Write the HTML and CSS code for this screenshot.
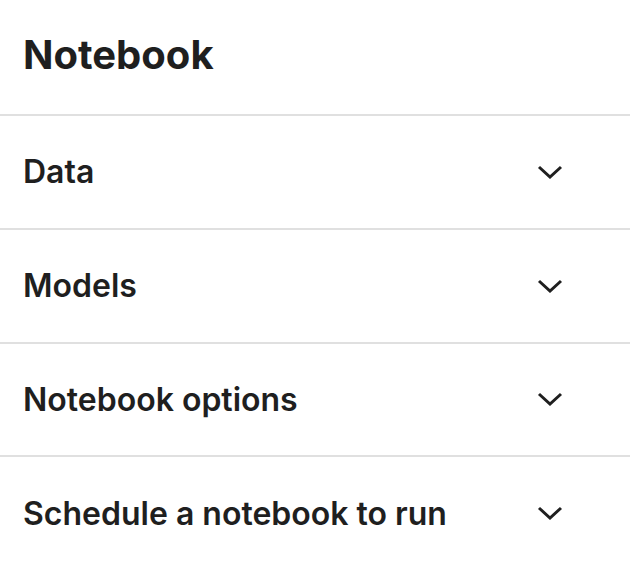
FILE: index.html
```html
<!DOCTYPE html>
<html>
<head>
<meta charset="utf-8">
<link rel="stylesheet" href="styles.css">
</head>
<body>
<div class="panel">
  <h1 class="title">Notebook</h1>
  <div class="section">
    <span class="label">Data</span>
    <svg class="chev" viewBox="0 0 26 14" width="26" height="14"><path d="M2 2 L13 12 L24 2" fill="none" stroke="#1f1f1f" stroke-width="3"/></svg>
  </div>
  <div class="section">
    <span class="label">Models</span>
    <svg class="chev" viewBox="0 0 26 14" width="26" height="14"><path d="M2 2 L13 12 L24 2" fill="none" stroke="#1f1f1f" stroke-width="3"/></svg>
  </div>
  <div class="section">
    <span class="label">Notebook options</span>
    <svg class="chev" viewBox="0 0 26 14" width="26" height="14"><path d="M2 2 L13 12 L24 2" fill="none" stroke="#1f1f1f" stroke-width="3"/></svg>
  </div>
  <div class="section">
    <span class="label">Schedule a notebook to run</span>
    <svg class="chev" viewBox="0 0 26 14" width="26" height="14"><path d="M2 2 L13 12 L24 2" fill="none" stroke="#1f1f1f" stroke-width="3"/></svg>
  </div>
</div>
</body>
</html>
```
FILE: styles.css
```css
html, body {
  margin: 0;
  padding: 0;
  background: #ffffff;
}
body {
  font-family: Inter, "Liberation Sans", sans-serif;
  color: #1f1f1f;
}
.panel {
  width: 630px;
}
.title {
  margin: 0;
  height: 114px;
  box-sizing: border-box;
  padding: 0 0 6px 23px;
  display: flex;
  align-items: center;
  font-size: 40px;
  font-weight: 700;
  letter-spacing: 0;
}
.section {
  border-top: 2px solid #e0e0e0;
  height: 111.8px;
  display: flex;
  align-items: center;
  justify-content: space-between;
  padding: 0 67px 0 23px;
}
.label {
  font-size: 32px;
  font-weight: 600;
}
.chev {
  display: block;
}
```
